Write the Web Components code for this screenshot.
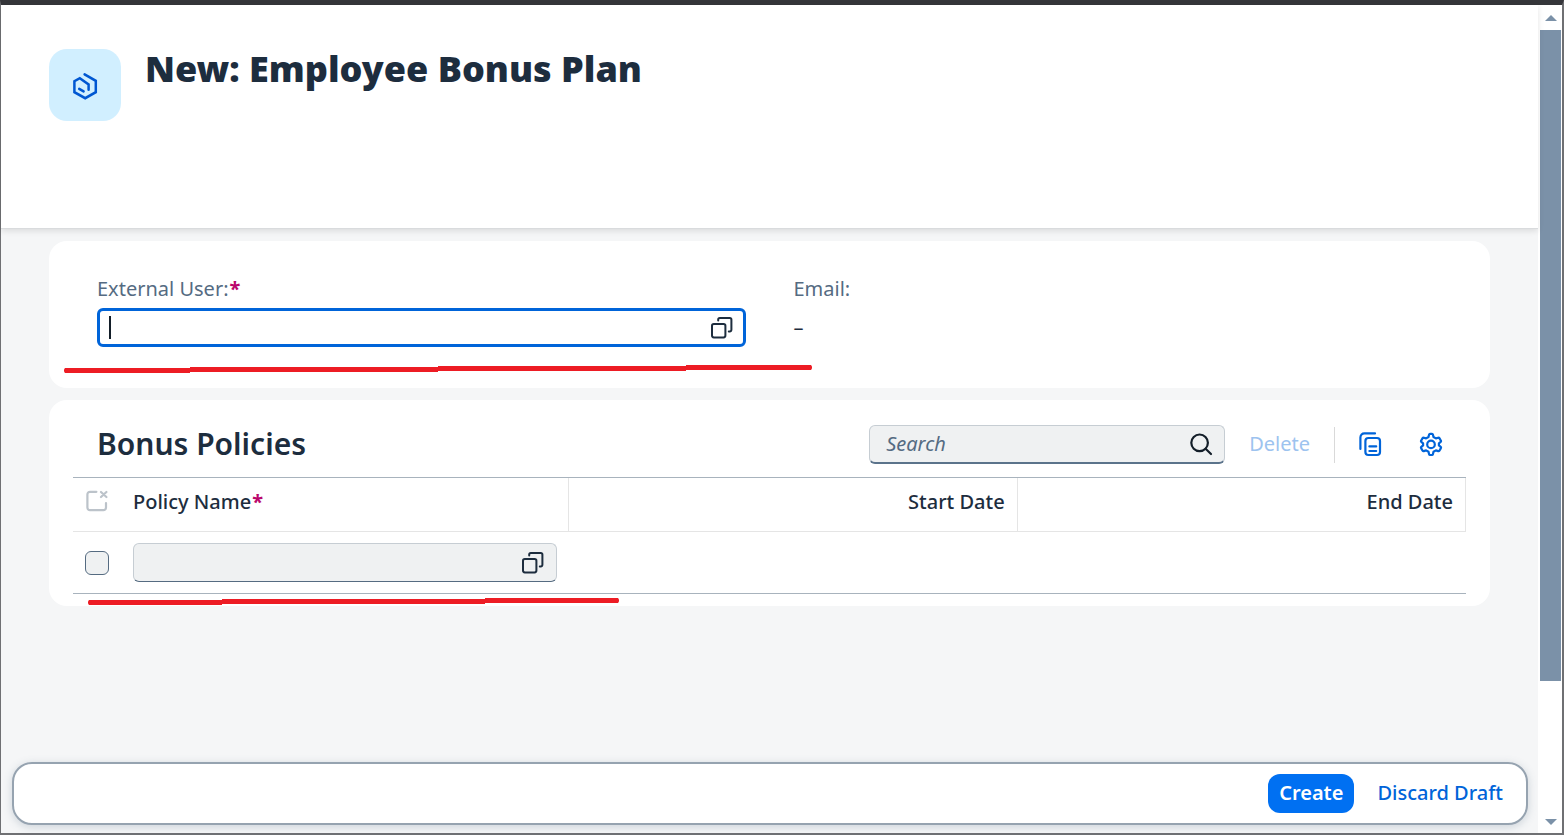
<!DOCTYPE html>
<html lang="en">
<head>
<meta charset="utf-8">
<meta name="viewport" content="width=device-width, initial-scale=1">
<title>New: Employee Bonus Plan</title>
<style>
  html, body { margin: 0; }
  body {
    font-family: "Noto Sans", "Open Sans", sans-serif;
    font-size: 20px;
    line-height: 28px;
    color: #1d2d3e;
    --brand: #0064d9;
    --label: #556b82;
    --field: #eff1f2;
    --line: #a8b3bd;
    --page: #f5f6f7;
  }
</style>
</head>
<body>
<bonus-app></bonus-app>
<script>
const define = (name, html, setup) => {
  const template = document.createElement('template');
  template.innerHTML = '<style>*{box-sizing:border-box}:host{box-sizing:border-box}:host([hidden]){display:none}button,input{font:inherit;color:inherit;margin:0}</style>' + html;
  customElements.define(name, class extends HTMLElement {
    constructor() {
      super();
      this.attachShadow({ mode: 'open' }).append(template.content.cloneNode(true));
    }
    connectedCallback() {
      if (setup && !this.ready) { this.ready = true; setup(this, this.shadowRoot); }
    }
  });
};

const ICONS = {
  product: '<path d="M12.6 2.4 23.8 8.8V20.2L13.2 26.2 2.4 20.2V9.2L7.8 6.2 16.6 12.4V17.8"/><path d="M7.2 16.8 11.6 19.4"/>',
  valuehelp: '<rect x="2" y="8" width="13.4" height="13.4" rx="1.8"/><path d="M8.2 4.4V3.6A1.6 1.6 0 0 1 9.8 2H19.8A1.6 1.6 0 0 1 21.4 3.6V13.8A1.6 1.6 0 0 1 19.8 15.4H18.8"/>',
  search: '<circle cx="10.6" cy="10.8" r="8.3"/><path d="M16.6 16.8 22 22"/>',
  copy: '<rect x="6.4" y="6" width="14.6" height="17" rx="3"/><path d="M1.4 17V5.4A4 4 0 0 1 5.4 1.4H16M10.4 14.4H17.2M10.4 19H17.2"/>',
  settings: '<circle cx="12" cy="12.4" r="3.8"/><path d="M10.1 2.6Q10.3 1.8 11 1.8H13Q13.7 1.8 13.9 2.6L14.5 5 16.9 6.4 19.2 5.7Q20 5.5 20.4 6.1L21.9 8.7Q22.3 9.3 21.7 9.9L19.9 11.4V13.4L21.7 14.9Q22.3 15.5 21.9 16.1L20.4 18.7Q20 19.3 19.2 19.1L16.9 18.4 14.5 19.8 13.9 22.2Q13.7 23 13 23H11Q10.3 23 10.1 22.2L9.5 19.8 7.1 18.4 4.8 19.1Q4 19.3 3.6 18.7L2.1 16.1Q1.7 15.5 2.3 14.9L4.1 13.4V11.4L2.3 9.9Q1.7 9.3 2.1 8.7L3.6 6.1Q4 5.5 4.8 5.7L7.1 6.4 9.5 5Z"/>',
  clear: '<path d="M11.4 2.8H5A2.6 2.6 0 0 0 2.4 5.4V18.6A2.6 2.6 0 0 0 5 21.2H18.4A2.6 2.6 0 0 0 21 18.6V14M16 3 21.4 8M21.4 3 16 8"/>'
};

define('ui-icon', `
  <style>
    :host { display: block; width: 24px; height: 24px; }
    svg { display: block; width: 100%; height: 100%; fill: none; stroke: currentColor; stroke-width: 2; stroke-linejoin: round; stroke-linecap: round; overflow: visible; }
    :host([name="product"]) { width: 26px; height: 28px; }
    :host([name="product"]) svg { stroke-width: 2.5; stroke-linejoin: miter; }
    :host([name="search"]) svg, :host([name="settings"]) svg, :host([name="copy"]) svg { stroke-width: 2.2; }
    :host([name="clear"]) svg { stroke-width: 2.2; }
  </style>
  <svg aria-hidden="true"></svg>`, (el, root) => {
    const svg = root.querySelector('svg');
    const name = el.getAttribute('name');
    svg.setAttribute('viewBox', name === 'product' ? '0 0 26 28' : '0 0 24 24');
    svg.innerHTML = ICONS[name];
  });

define('page-header', `
  <style>
    :host { display: flex; gap: 24px; min-height: 224px; padding: 44px 48px; background: #fff; border-bottom: 1px solid #d9dbdd; box-shadow: 0 2px 6px #0000001c; position: relative; }
    .avatar { display: grid; place-items: center; flex: none; width: 72px; height: 72px; border-radius: 18px; background: #d1efff; color: #0057d2; padding-top: 2px; }
    h1 { margin: 0; font-size: 36px; line-height: 40px; font-weight: 900; }
  </style>
  <div class="avatar"><ui-icon name="product"></ui-icon></div>
  <h1><slot></slot></h1>`);

define('ui-card', `
  <style>:host { display: block; position: relative; background: #fff; border-radius: 18px; }</style>
  <slot></slot>`);

define('value-field', `
  <style>
    :host { display: block; }
    label { display: block; color: var(--label); line-height: 32px; margin-bottom: 3px; }
    b { color: #ba066c; margin-left: 1px; line-height: 20px; }
    .box { display: flex; align-items: center; height: 39px; padding: 0 11px; border: 1px solid #c6cdd3; border-bottom-color: #556b81; border-radius: 6px; background: var(--field); }
    .caret { display: none; width: 2px; height: 23px; background: #131e29; }
    input { flex: 1; min-width: 0; height: 32px; border: 0; padding: 0; outline: 0; background: none; }
    button { border: 0; padding: 0; background: none; }
    :host([active]) .box { border: 3px solid var(--brand); background: #fff; padding: 0 9px; }
    :host([active]) .caret { display: block; }
  </style>
  <label for="value"><slot></slot><b>*</b></label>
  <div class="box"><span class="caret"></span><input id="value" type="text"><button type="button" aria-label="Value help"><ui-icon name="valuehelp"></ui-icon></button></div>`,
  (el, root) => {
    if (el.hasAttribute('name')) {
      root.querySelector('label').remove();
      root.querySelector('input').setAttribute('aria-label', el.getAttribute('name'));
    }
  });

define('read-field', `
  <style>
    :host { display: block; }
    dl, dd { margin: 0; }
    dt { color: var(--label); line-height: 32px; margin-bottom: 3px; }
    dd { line-height: 39px; }
  </style>
  <dl><dt><slot></slot></dt><dd><slot name="value"></slot></dd></dl>`);

define('field-grid', `
  <style>:host { display: grid; grid-template-columns: 1fr 1fr; gap: 48px; padding: 32px 48px 41px; }</style>
  <slot></slot>`);

define('table-toolbar', `
  <style>
    :host { display: flex; align-items: center; padding: 25px 0 13px 24px; }
    h2 { margin: 0 auto 0 0; font-size: 30px; line-height: 36px; font-weight: 600; padding-bottom: 1px; }
    .search { display: flex; align-items: center; width: 356px; height: 39px; padding: 0 11px 0 16px; border: 1px solid #c6cdd3; border-bottom: 2px solid #5b738b; border-radius: 6px; background: var(--field); }
    input { flex: 1; min-width: 0; border: 0; padding: 0; outline: 0; background: none; }
    input::placeholder { color: var(--label); font-style: italic; opacity: 1; }
    button { border: 0; padding: 0; background: none; color: var(--brand); }
    .search button { color: #131e29; }
    .delete { margin: 0 24px; padding-bottom: 2px; }
    .delete:disabled { color: #9dc3ef; }
    .rule { width: 1px; height: 36px; background: #d9d9d9; margin-right: 12px; }
    .tool { display: grid; place-items: center; width: 48px; height: 39px; padding-bottom: 2px; }
    .tool + .tool { margin: 0 11px 0 12px; }
  </style>
  <h2><slot></slot></h2>
  <div class="search"><input type="text" placeholder="Search" aria-label="Search"><button type="button" aria-label="Run search"><ui-icon name="search"></ui-icon></button></div>
  <button class="delete" type="button" disabled>Delete</button>
  <span class="rule"></span>
  <button class="tool" type="button" aria-label="Copy"><ui-icon name="copy"></ui-icon></button>
  <button class="tool" type="button" aria-label="Settings"><ui-icon name="settings"></ui-icon></button>`);

define('policy-table', `
  <style>
    :host { display: block; }
    table { width: 100%; table-layout: fixed; border-collapse: separate; border-spacing: 0; border-top: 1px solid var(--line); border-bottom: 1px solid var(--line); }
    .select { width: 48px; }
    th { height: 54px; padding: 0 12px 6px; text-align: right; font-weight: 500; border-right: 1px solid #e5e5e5; border-bottom: 1px solid #e5e5e5; }
    th.select { border-right: 0; color: #bcc3ca; padding-bottom: 8px; }
    th.name { text-align: left; }
    b { color: #ba066c; margin-left: 1px; }
    td { height: 61px; padding: 0 12px; }
    input { display: block; appearance: none; width: 24px; height: 24px; border: 1px solid #556b81; border-radius: 6px; background: var(--field); }
  </style>
  <table>
    <thead><tr>
      <th class="select" aria-label="Clear selection"><ui-icon name="clear"></ui-icon></th>
      <th class="name">Policy Name<b>*</b></th><th>Start Date</th><th>End Date</th>
    </tr></thead>
    <tbody><tr>
      <td><input type="checkbox" aria-label="Select row"></td>
      <td><value-field name="Policy Name"></value-field></td><td></td><td></td>
    </tr></tbody>
  </table>`);

/* Pen underline laid over a card: each segment is "left right top". */
define('pen-mark', `
  <style>
    :host { position: absolute; left: 0; bottom: 0; pointer-events: none; }
    svg { display: block; fill: #ed1c24; }
  </style>
  <svg aria-hidden="true" width="780" height="30"></svg>`, (el, root) => {
    const segments = el.getAttribute('strokes').split(',').map(s => s.trim().split(' ').map(Number));
    const first = segments[0], last = segments[segments.length - 1];
    const cap = (x, y) => `<rect x="${x}" y="${y}" width="4" height="5" rx="2"/>`;
    root.querySelector('svg').innerHTML = segments.map(([a, b, y]) =>
      `<rect x="${a}" y="${y}" width="${b - a}" height="5"/>`).join('') +
      cap(first[0] - 1, first[2]) + cap(last[1] - 3, last[2]);
  });

define('action-bar', `
  <style>
    :host { display: flex; justify-content: flex-end; align-items: center; gap: 12px; height: 63px; margin: auto 10px 8px 11px; padding: 0 12px; background: #fff; border: 2px solid #96a3b0; border-radius: 20px; box-shadow: 0 2px 8px #556b8240; }
    button { height: 39px; padding: 0 11px 1px; border: 0; border-radius: 12px; background: none; color: var(--brand); font-weight: 500; }
    .create { background: #0070f2; color: #fff; font-weight: 600; }
  </style>
  <button class="create" type="button">Create</button>
  <button type="button">Discard Draft</button>`);

define('side-scroller', `
  <style>
    :host { display: flex; flex-direction: column; width: 24px; padding: 10px 1px 8px 2px; background: #fff; color: #7b91a8; }
    svg { display: block; width: 12px; height: 6px; margin: 0 auto; fill: currentColor; flex: none; }
    .track { flex: 1; margin: 9px 0; }
    .thumb { height: 83.5%; background: currentColor; }
  </style>
  <svg viewBox="0 0 12 6" aria-hidden="true"><path d="M6 0 12 6H0Z"/></svg>
  <div class="track"><div class="thumb"></div></div>
  <svg viewBox="0 0 12 6" aria-hidden="true"><path d="M0 0H12L6 6Z"/></svg>`);

define('bonus-app', `
  <style>
    :host { display: flex; min-height: 100vh; border: 1px solid #6f7073; border-top: 5px solid #35363a; border-right-width: 2px; border-bottom-width: 2px; background: var(--page); }
    main { flex: 1; min-width: 0; display: flex; flex-direction: column; }
    .sections { display: grid; gap: 12px; padding: 12px 48px 24px; }
    .list { padding: 0 24px 12px; }
  </style>
  <main>
    <page-header>New: Employee Bonus Plan</page-header>
    <div class="sections">
      <ui-card>
        <field-grid>
          <value-field active>External User:</value-field>
          <read-field>Email:<span slot="value">–</span></read-field>
        </field-grid>
        <pen-mark strokes="16 141 10, 141 389 9, 389 637 8, 637 762 7"></pen-mark>
      </ui-card>
      <ui-card>
        <div class="list">
          <table-toolbar>Bonus Policies</table-toolbar>
          <policy-table></policy-table>
        </div>
        <pen-mark strokes="40 173 24, 173 436 23, 436 569 22"></pen-mark>
      </ui-card>
    </div>
    <action-bar></action-bar>
  </main>
  <side-scroller></side-scroller>`);
</script>
</body>
</html>
